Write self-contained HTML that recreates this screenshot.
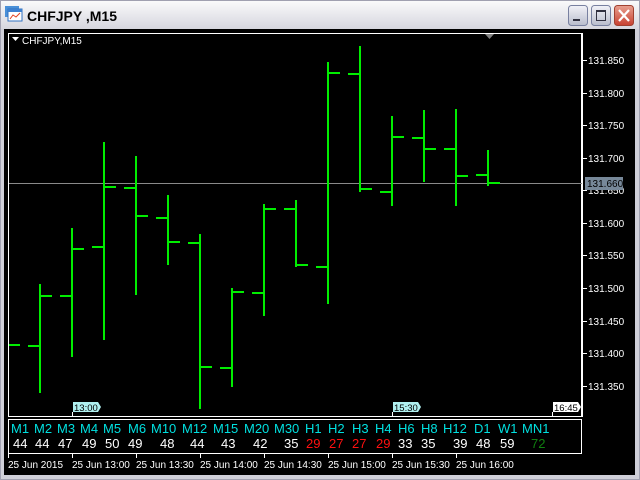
<!DOCTYPE html>
<html><head><meta charset="utf-8"><style>
html,body{margin:0;padding:0;background:#d4d0c8;}
body{width:640px;height:480px;overflow:hidden;position:relative;font-family:"Liberation Sans",sans-serif;}
</style></head><body>
<svg width="640" height="480" viewBox="0 0 640 480" xmlns="http://www.w3.org/2000/svg" style="position:absolute;left:0;top:0">
<defs>
<linearGradient id="tb" x1="0" y1="0" x2="0" y2="1"><stop offset="0" stop-color="#fbfbfc"/><stop offset="1" stop-color="#d6d6de"/></linearGradient>
<linearGradient id="bt" x1="0" y1="0" x2="0" y2="1"><stop offset="0" stop-color="#f2f2f8"/><stop offset="1" stop-color="#b8bccc"/></linearGradient>
<linearGradient id="cl" x1="0" y1="0" x2="0" y2="1"><stop offset="0" stop-color="#e8a090"/><stop offset="1" stop-color="#c84030"/></linearGradient>
</defs>
<rect x="0" y="0" width="640" height="480" fill="#cfcfd8"/>
<rect x="0" y="0" width="640" height="29" fill="url(#tb)"/>
<rect x="0.5" y="0.5" width="639" height="479" fill="none" stroke="#a0a0b0"/>
<rect x="5" y="6" width="14" height="11" fill="#4a90d8"/><rect x="8" y="9" width="14" height="12" fill="#fff" stroke="#3070c0"/><rect x="8" y="9" width="14" height="3" fill="#3c80d0"/><path d="M10 19 L13 15 L16 17 L20 13" stroke="#e04020" fill="none"/>
<text x="27" y="21" font-size="14" font-weight="bold" fill="#000" font-family="Liberation Sans, sans-serif">CHFJPY ,M15</text>
<rect x="568.5" y="5.5" width="19" height="20" rx="3" fill="url(#bt)" stroke="#7880a0"/><rect x="573" y="19" width="7" height="2" fill="#303040"/>
<rect x="591.5" y="5.5" width="19" height="20" rx="3" fill="url(#bt)" stroke="#7880a0"/><rect x="596.5" y="10.5" width="9" height="10" fill="none" stroke="#303040"/><rect x="596" y="10" width="10" height="2" fill="#303040"/>
<rect x="614.5" y="5.5" width="19" height="20" rx="3" fill="url(#cl)" stroke="#a04030"/><path d="M619 10 L629 21 M629 10 L619 21" stroke="#fff" stroke-width="2.2"/>
<rect x="4" y="29" width="631" height="446" fill="#000"/>
<rect x="8.5" y="33.5" width="573" height="383" fill="none" stroke="#fff"/>
<rect x="8.5" y="419.5" width="573" height="34" fill="none" stroke="#fff"/>
<line x1="582.5" y1="33" x2="582.5" y2="417" stroke="#fff"/>
<text x="22" y="44" font-size="10" fill="#fff">CHFJPY,M15</text>
<path d="M12 37 L19 37 L15.5 41 Z" fill="#fff"/>
<path d="M485 34 L494 34 L489.5 39 Z" fill="#808080"/>
<line x1="9" y1="183.5" x2="582" y2="183.5" stroke="#8a8a8a"/>
<g stroke="#00ee00" stroke-width="2" fill="none">
<path d="M9 345 H20"/>
<path d="M40 284 V393 M28 346 H40 M40 296 H52"/>
<path d="M72 228 V357 M60 296 H72 M72 249 H84"/>
<path d="M104 142 V340 M92 247 H104 M104 187 H116"/>
<path d="M136 156 V295 M124 188 H136 M136 216 H148"/>
<path d="M168 195 V265 M156 218 H168 M168 242 H180"/>
<path d="M200 234 V409 M188 243 H200 M200 367 H212"/>
<path d="M232 288 V387 M220 368 H232 M232 292 H244"/>
<path d="M264 204 V316 M252 293 H264 M264 209 H276"/>
<path d="M296 200 V267 M284 209 H296 M296 265 H308"/>
<path d="M328 62 V304 M316 267 H328 M328 73 H340"/>
<path d="M360 46 V192 M348 74 H360 M360 189 H372"/>
<path d="M392 116 V206 M380 192 H392 M392 137 H404"/>
<path d="M424 110 V182 M412 138 H424 M424 149 H436"/>
<path d="M456 109 V206 M444 149 H456 M456 176 H468"/>
<path d="M488 150 V186 M476 175 H488 M488 183 H500"/>
</g>
<g fill="#fff" font-size="10" font-family="Liberation Sans, sans-serif">
<g stroke="#fff"><path d="M583 60.5 H587 M583 93.5 H587 M583 125.5 H587 M583 158.5 H587 M583 190.5 H587 M583 223.5 H587 M583 255.5 H587 M583 288.5 H587 M583 321.5 H587 M583 353.5 H587 M583 386.5 H587"/></g>
<text x="588" y="64">131.850</text><text x="588" y="97">131.800</text><text x="588" y="129">131.750</text><text x="588" y="162">131.700</text><text x="588" y="194">131.650</text><text x="588" y="227">131.600</text><text x="588" y="259">131.550</text><text x="588" y="292">131.500</text><text x="588" y="325">131.450</text><text x="588" y="357">131.400</text><text x="588" y="390">131.350</text>
</g>
<rect x="585" y="177" width="38" height="13" fill="#778899"/>
<text x="587" y="187" font-size="10" fill="#000">131.660</text>
<line x1="72.5" y1="412" x2="72.5" y2="417" stroke="#fff"/>
<path d="M73 402 H98 L101 407 L98 412 H73 Z" fill="#b0f0f0"/><text x="74" y="411" font-size="9.5" fill="#000">13:00</text>
<line x1="392.5" y1="412" x2="392.5" y2="417" stroke="#fff"/>
<path d="M393 402 H418 L421 407 L418 412 H393 Z" fill="#b0f0f0"/><text x="394" y="411" font-size="9.5" fill="#000">15:30</text>
<line x1="552.5" y1="412" x2="552.5" y2="417" stroke="#fff"/>
<path d="M553 402 H578 L581 407 L578 412 H553 Z" fill="#fff"/><text x="554" y="411" font-size="9.5" fill="#000">16:45</text>
<g font-size="13" fill="#00e0e0" font-family="Liberation Sans, sans-serif">
<text x="11" y="433">M1</text><text x="34" y="433">M2</text><text x="57" y="433">M3</text><text x="80" y="433">M4</text><text x="103" y="433">M5</text><text x="128" y="433">M6</text><text x="151" y="433">M10</text><text x="182" y="433">M12</text><text x="213" y="433">M15</text><text x="244" y="433">M20</text><text x="274" y="433">M30</text><text x="305" y="433">H1</text><text x="328" y="433">H2</text><text x="352" y="433">H3</text><text x="375" y="433">H4</text><text x="398" y="433">H6</text><text x="421" y="433">H8</text><text x="443" y="433">H12</text><text x="474" y="433">D1</text><text x="498" y="433">W1</text><text x="522" y="433">MN1</text>
</g>
<g font-size="13" fill="#fff" font-family="Liberation Sans, sans-serif">
<text x="13" y="448">44</text><text x="35" y="448">44</text><text x="58" y="448">47</text><text x="82" y="448">49</text><text x="105" y="448">50</text><text x="128" y="448">49</text><text x="160" y="448">48</text><text x="190" y="448">44</text><text x="221" y="448">43</text><text x="253" y="448">42</text><text x="284" y="448">35</text>
<text x="306" y="448" fill="#ff1010">29</text><text x="329" y="448" fill="#ff1010">27</text><text x="352" y="448" fill="#ff1010">27</text><text x="376" y="448" fill="#ff1010">29</text>
<text x="398" y="448">33</text><text x="421" y="448">35</text><text x="453" y="448">39</text><text x="476" y="448">48</text><text x="500" y="448">59</text><text x="531" y="448" fill="#108010">72</text>
</g>
<g stroke="#fff"><path d="M8.5 454 V458 M72.5 454 V458 M136.5 454 V458 M200.5 454 V458 M264.5 454 V458 M328.5 454 V458 M392.5 454 V458 M456.5 454 V458"/></g>
<g font-size="10" fill="#fff" font-family="Liberation Sans, sans-serif">
<text x="8" y="468">25 Jun 2015</text><text x="72" y="468">25 Jun 13:00</text><text x="136" y="468">25 Jun 13:30</text><text x="200" y="468">25 Jun 14:00</text><text x="264" y="468">25 Jun 14:30</text><text x="328" y="468">25 Jun 15:00</text><text x="392" y="468">25 Jun 15:30</text><text x="456" y="468">25 Jun 16:00</text>
</g>
</svg>
</body></html>
